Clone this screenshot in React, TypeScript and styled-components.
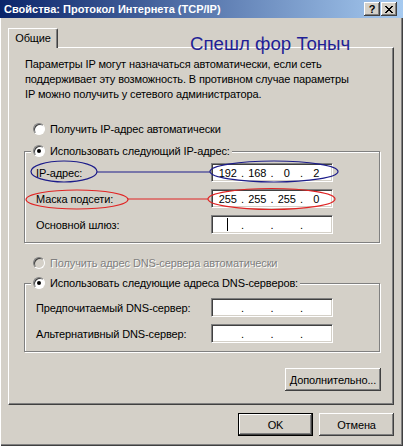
import React from 'react';
import styled, { createGlobalStyle, css } from 'styled-components';

const GlobalStyle = createGlobalStyle`
  html, body {
    margin: 0;
    padding: 0;
    background: #d4d0c8;
  }
  body {
    font-family: "Liberation Sans", Arial, sans-serif;
    font-size: 11px;
    letter-spacing: -0.12px;
    color: #000;
  }
`;

const CLOSE_GLYPH = ['xx....xx', '.xx..xx.', '..xxxx..', '...xx...', '..xxxx..', '.xx..xx.', 'xx....xx'];

export default function App() {
    return (
        <>
        <GlobalStyle />
        <Window>
            <TitleBar>
                <Title>Свойства: Протокол Интернета (TCP/IP)</Title>
                <CaptionButtons>
                    <CaptionButton>?</CaptionButton>
                    <CaptionButton>
                        <svg width='8' height='7' viewBox='0 0 8 7' shapeRendering='crispEdges'>
                            {CLOSE_GLYPH.flatMap((row, y) =>
                                row.split('').map((c, x) => c === 'x' ? <rect key={`${x}-${y}`} x={x} y={y} width='1' height='1' fill='#000' /> : null)
                            )}
                        </svg>
                    </CaptionButton>
                </CaptionButtons>
            </TitleBar>

            <Body>
                <TabStrip>
                    <Tab>Общие</Tab>
                </TabStrip>
                <Panel>
                    <Intro>
                        Параметры IP могут назначаться автоматически, если сеть<br />
                        поддерживает эту возможность. В противном случае параметры<br />
                        IP можно получить у сетевого администратора.
                    </Intro>

                    <RadioRow $mt={20}>
                        <Radio />
                        Получить IP-адрес автоматически
                    </RadioRow>

                    <Group $mt={8}>
                        <Legend>
                            <RadioRow as='span'>
                                <Radio $checked />
                                Использовать следующий IP-адрес:
                            </RadioRow>
                        </Legend>
                        <Rows $pt={5}>
                            <span>IP-адрес:</span>
                            <IpField values={['192', '168', '0', '2']} />
                            <span>Маска подсети:</span>
                            <IpField values={['255', '255', '255', '0']} />
                            <span>Основной шлюз:</span>
                            <IpField values={['', '', '', '']} caret />
                        </Rows>
                    </Group>

                    <RadioRow $mt={13} $disabled>
                        <Radio $disabled />
                        Получить адрес DNS-сервера автоматически
                    </RadioRow>

                    <Group $mt={6}>
                        <Legend>
                            <RadioRow as='span'>
                                <Radio $checked />
                                Использовать следующие адреса DNS-серверов:
                            </RadioRow>
                        </Legend>
                        <Rows $pt={8}>
                            <span>Предпочитаемый DNS-сервер:</span>
                            <IpField values={['', '', '', '']} />
                            <span>Альтернативный DNS-сервер:</span>
                            <IpField values={['', '', '', '']} />
                        </Rows>
                    </Group>

                    <AdvancedRow>
                        <Button $w={96}>Дополнительно...</Button>
                    </AdvancedRow>
                </Panel>

                <Footer>
                    <Button $w={75} $default>OK</Button>
                    <Button $w={75}>Отмена</Button>
                </Footer>
            </Body>

            <Annotations width='403' height='446' viewBox='0 0 403 446'>
                <ellipse cx='64' cy='171.5' rx='33' ry='10.5' fill='none' stroke='#1c1c8a' strokeWidth='1.2' />
                <line x1='97' y1='172' x2='210' y2='172' stroke='#1c1c8a' strokeWidth='1.2' />
                <ellipse cx='274' cy='171.5' rx='64' ry='10.5' fill='none' stroke='#1c1c8a' strokeWidth='1.2' />
                <ellipse cx='77' cy='199.5' rx='51' ry='9.5' fill='none' stroke='#e02424' strokeWidth='1.2' />
                <line x1='128' y1='199' x2='208' y2='199' stroke='#e02424' strokeWidth='1.2' />
                <ellipse cx='271.5' cy='199' rx='63.5' ry='10.5' fill='none' stroke='#e02424' strokeWidth='1.2' />
            </Annotations>
            <Caption>Спешл фор Тоныч</Caption>
        </Window>
        </>
    );
}

const IpField = ({ values, caret }: { values: string[]; caret?: boolean }) => (
    <SField>
        {values.map((v, i) => (
            <React.Fragment key={i}>
                {i > 0 && <Dot>.</Dot>}
                <Segment>{caret && i === 0 ? <Caret /> : v}</Segment>
            </React.Fragment>
        ))}
    </SField>
);

const Window = styled.div`
    position: relative;
    width: 403px;
    height: 446px;
    box-sizing: border-box;
    background: #d4d0c8;
    box-shadow: inset 1px 0 0 #fff, inset -1px -1px 0 #404040, inset -2px -2px 0 #808080;
    display: flex;
    flex-direction: column;
    overflow: hidden;
`;

const TitleBar = styled.div`
    height: 18px;
    display: flex;
    align-items: center;
    padding: 0 6px 0 4px;
    background: linear-gradient(to right, #0a246a, #a6caf0);
    color: #fff;
    font-weight: bold;
    font-size: 11px;
    letter-spacing: 0;
`;

const Title = styled.span`
    flex: 1;
    white-space: nowrap;
`;

const CaptionButtons = styled.div`
    display: flex;
    gap: 1px;
`;

const CaptionButton = styled.div`
    width: 16px;
    height: 14px;
    box-sizing: border-box;
    background: #d4d0c8;
    color: #000;
    font-size: 11px;
    font-weight: bold;
    display: flex;
    align-items: center;
    justify-content: center;
    box-shadow: inset -1px -1px 0 #404040, inset 1px 1px 0 #fff, inset -2px -2px 0 #808080;
`;

const Body = styled.div`
    display: flex;
    flex-direction: column;
    padding: 10px 9px 0 8px;
`;

const TabStrip = styled.div`
    display: flex;
    align-items: flex-end;
    height: 19px;
`;

const Tab = styled.div`
    position: relative;
    z-index: 1;
    width: 50px;
    height: 20px;
    margin-bottom: -1px;
    box-sizing: border-box;
    background: #d4d0c8;
    border-top: 1px solid #fff;
    border-left: 1px solid #fff;
    border-right: 1px solid #404040;
    border-top-right-radius: 2px;
    box-shadow: inset -1px 0 0 #808080;
    display: flex;
    align-items: center;
    justify-content: center;
    padding-bottom: 1px;
`;

const Panel = styled.div`
    height: 358px;
    box-sizing: border-box;
    border-top: 1px solid #fff;
    border-left: 1px solid #fff;
    border-right: 1px solid #404040;
    border-bottom: 1px solid #404040;
    box-shadow: inset -1px -1px 0 #808080;
    padding: 9px 13px 0 15px;
    display: flex;
    flex-direction: column;
`;

const Intro = styled.p`
    margin: 0 0 0 1px;
    line-height: 15px;
    white-space: nowrap;
`;

const RadioRow = styled.label<{ $mt?: number; $disabled?: boolean }>`
    display: flex;
    align-items: center;
    gap: 5px;
    height: 14px;
    white-space: nowrap;
    margin-top: ${p => p.$mt ?? 0}px;
    padding-left: ${p => (p.$mt !== undefined ? 9 : 0)}px;
    ${p => p.$disabled && css`
        color: #808080;
        text-shadow: 1px 1px 0 #fff;
    `}
`;

const Radio = styled.span<{ $checked?: boolean; $disabled?: boolean }>`
    position: relative;
    width: 12px;
    height: 12px;
    box-sizing: border-box;
    border-radius: 50%;
    border: 1px solid;
    border-color: #808080 #fff #fff #808080;
    background: ${p => (p.$disabled ? '#d4d0c8' : '#fff')};
    box-shadow: inset 1px 1px 0 #404040;
    flex-shrink: 0;
    ${p => p.$checked && css`
        &::after {
            content: '';
            position: absolute;
            left: 3px;
            top: 3px;
            width: 4px;
            height: 4px;
            border-radius: 50%;
            background: #000;
        }
    `}
`;

const Group = styled.fieldset<{ $mt: number }>`
    margin: ${p => p.$mt}px 0 0 0;
    padding: 0;
    min-width: 0;
    border: 1px solid #808080;
    box-shadow: inset 1px 1px 0 #fff, 1px 1px 0 #fff;
`;

const Legend = styled.legend`
    margin-left: 6px;
    padding: 0 2px;
    background: #d4d0c8;
    height: 14px;
`;

const Rows = styled.div<{ $pt: number }>`
    display: grid;
    grid-template-columns: 175px 122px;
    grid-auto-rows: 19px;
    row-gap: 7px;
    align-items: center;
    padding: ${p => p.$pt}px 0 8px 11px;
    white-space: nowrap;
`;

const SField = styled.div`
    height: 19px;
    box-sizing: border-box;
    background: #fff;
    border: 1px solid;
    border-color: #808080 #fff #fff #808080;
    box-shadow: inset 1px 1px 0 #404040, inset -1px -1px 0 #d4d0c8;
    padding: 0 1px;
    display: grid;
    grid-template-columns: 1fr 0 1fr 0 1fr 0 1fr;
    align-items: center;
`;

const Segment = styled.span`
    display: flex;
    justify-content: center;
    align-items: center;
`;

const Dot = styled.span`
    width: 0;
    display: flex;
    justify-content: center;
`;

const Caret = styled.span`
    display: block;
    width: 1px;
    height: 13px;
    background: #000;
`;

const AdvancedRow = styled.div`
    display: flex;
    justify-content: flex-end;
    margin-top: 16px;
    margin-right: -1px;
`;

const Footer = styled.div`
    display: flex;
    justify-content: flex-end;
    gap: 6px;
    margin-top: 8px;
`;

const Button = styled.button<{ $w: number; $default?: boolean }>`
    width: ${p => p.$w}px;
    height: 23px;
    padding: 0;
    border: none;
    font-family: inherit;
    font-size: 11px;
    letter-spacing: inherit;
    color: #000;
    background: #d4d0c8;
    box-shadow: inset -1px -1px 0 #404040, inset 1px 1px 0 #fff, inset -2px -2px 0 #808080;
    ${p => p.$default && css`
        box-shadow: inset 0 0 0 1px #000, inset -2px -2px 0 #404040, inset 2px 2px 0 #fff, inset -3px -3px 0 #808080;
    `}
`;

const Annotations = styled.svg`
    position: absolute;
    left: 0;
    top: 0;
    pointer-events: none;
`;

const Caption = styled.span`
    position: absolute;
    left: 190px;
    top: 34px;
    font-size: 18.7px;
    line-height: 19px;
    letter-spacing: 0;
    color: #1f1f96;
    white-space: nowrap;
`;
